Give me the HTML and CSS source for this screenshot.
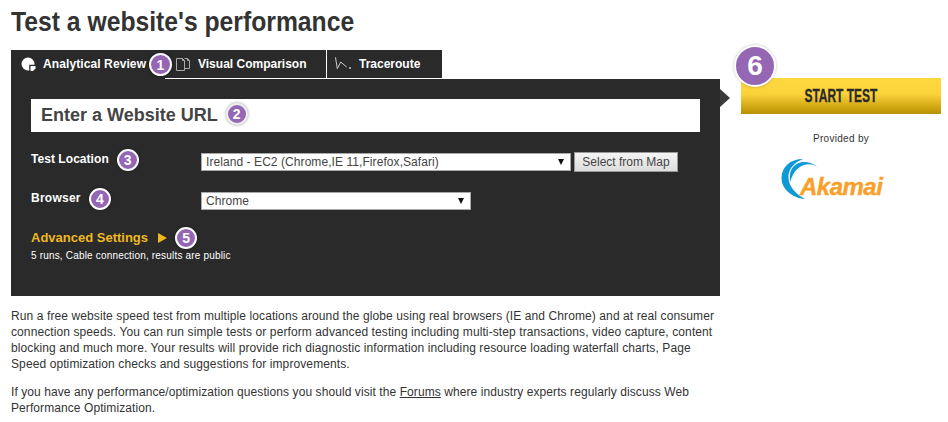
FILE: index.html
```html
<!DOCTYPE html>
<html lang="en">
<head>
<meta charset="utf-8">
<title>WebPagetest</title>
<link rel="stylesheet" href="styles.css">
</head>
<body>
<div class="page">
  <main class="main">
    <h1 class="title"><span class="title-text">Test a website's performance</span></h1>
    <div class="tabs">
      <div class="tab tab-active">
        <svg class="tab-icon" width="16" height="16" viewBox="0 0 16 16"><path d="M8 1.500a6.500 6.500 0 1 0 0 13c.6 0 1.200-.1 1.200-.1V8.800h5.200c.1-.3.1-.5.1-.8A6.500 6.500 0 0 0 8 1.500z" fill="#fff"/><path d="M10.500 10h5v2.500l-2.500 2.500h-2.500z" fill="#fff"/></svg>
        <span>Analytical Review</span>
        <b class="badge badge-tab">1</b>
      </div>
      <div class="tab tab-visual">
        <svg class="tab-icon" width="16" height="16" viewBox="0 0 16 16" fill="none" stroke="#aaa"><path d="M1.500 2.500h6l2 2v10h-8z"/><path d="M7.500 2.500v2h2M9.500 2.500h3l2 2v8h-5M12.500 2.500v2h2"/></svg>
        <span>Visual Comparison</span>
      </div>
      <div class="tab tab-trace">
        <svg class="tab-icon tab-icon-trace" width="18" height="16" viewBox="0 0 18 16" fill="none" stroke="#ccc"><path d="M.5 1.300l1.800 11.400 3.400-6.700 6 5"/><circle cx="15" cy="12" r="1" fill="#ccc" stroke="none"/></svg>
        <span>Traceroute</span>
      </div>
    </div>
    <section class="panel">
      <div class="url-box">
        <span>Enter a Website URL</span>
        <b class="badge badge-ring">2</b>
      </div>
      <div class="row row-location">
        <label class="field-label"><span>Test Location</span><b class="badge">3</b></label>
        <div class="select select-wide"><span>Ireland - EC2 (Chrome,IE 11,Firefox,Safari)</span><i class="arrow"></i></div>
        <button class="map-btn" type="button">Select from Map</button>
      </div>
      <div class="row row-browser">
        <label class="field-label"><span>Browser</span><b class="badge">4</b></label>
        <div class="select select-narrow"><span>Chrome</span><i class="arrow"></i></div>
      </div>
      <div class="advanced">
        <span class="adv-link">Advanced Settings</span>
        <i class="adv-arrow"></i>
        <b class="badge">5</b>
      </div>
      <p class="summary">5 runs, Cable connection, results are public</p>
      <i class="panel-arrow"></i>
    </section>
    <p class="copy">Run a free website speed test from multiple locations around the globe using real browsers (IE and Chrome) and at real consumer connection speeds. You can run simple tests or perform advanced testing including multi-step transactions, video capture, content blocking and much more. Your results will provide rich diagnostic information including resource loading waterfall charts, Page Speed optimization checks and suggestions for improvements.</p>
    <p class="copy copy-last">If you have any performance/optimization questions you should visit the <a class="link" href="#">Forums</a> where industry experts regularly discuss Web Performance Optimization.</p>
  </main>
  <aside class="side">
    <div class="start">
      <b class="badge badge-big">6</b>
      <div class="start-btn"><span class="start-text">START TEST</span></div>
    </div>
    <p class="provided">Provided by</p>
    <div class="akamai">
      <svg class="akamai-swoosh" width="42" height="42" viewBox="0 0 42 42">
        <path d="M23 1C10 1 1.500 9 1.500 20 1.500 31 12 40 25 41 16 36 9 29 8.500 20 8 12 13 5 23 1z" fill="#0f9ad6"/>
        <path d="M38 9.500C31 3 20 2 14 8 10 12 9 18 10.500 24 12 16 17 9 24 7 29 5.500 34 6.500 38 9.500z" fill="#0f9ad6"/>
      </svg>
      <span class="akamai-text">Akamai</span>
    </div>
  </aside>
</div>
</body>
</html>
```
FILE: styles.css
```css
* { box-sizing: border-box; }
html, body { margin: 0; padding: 0; background: #fff; }
body { width: 948px; height: 422px; overflow: hidden; font-family: "Liberation Sans", Arial, sans-serif; color: #333; }
.page { display: flex; align-items: flex-start; padding-left: 11px; }
.main { width: 709px; flex: none; }
.title { margin: 0; padding-top: 5px; height: 50px; font-size: 27px; line-height: 34px; font-weight: bold; color: #333; }
.title-text { display: inline-block; white-space: nowrap; transform: scaleX(.915); transform-origin: left center; }
.tabs { display: flex; height: 29px; }
.tab { position: relative; display: flex; align-items: center; background: #2a2a2a; color: #fff; font-size: 12px; font-weight: bold; height: 29px; border-right: 1px solid #fff; border-bottom: 1px solid #fff; }
.tab-active { width: 154px; padding: 0 0 2px 9px; border: 0; letter-spacing: .1px; }
.tab-visual { width: 162px; padding-left: 10px; }
.tab-trace { width: 115px; padding-left: 8px; border-right: 0; }
.tab-icon { flex: none; margin-right: 7px; }
.tab-icon-trace { margin-right: 6px; }
.panel { position: relative; height: 217px; background: #2a2a2a; padding: 20px 20px 0; }
.url-box { display: flex; align-items: center; height: 33px; background: #fff; padding-left: 10px; font-size: 18px; font-weight: bold; color: #444; }
.url-box .badge { margin: 0 0 3px 8px; }
.row { display: flex; align-items: center; }
.row-location { margin-top: 16px; height: 28px; }
.row-browser { margin-top: 11px; height: 28px; }
.field-label { width: 170px; flex: none; display: flex; align-items: center; padding-bottom: 4px; color: #fff; font-size: 12px; font-weight: bold; letter-spacing: .05px; }
.row-browser .field-label { letter-spacing: .25px; }
.field-label span { margin-bottom: 2px; }
.field-label .badge { margin-left: 8px; }
.select { position: relative; height: 18px; background: #fff; border: 1px solid #a9a9a9; color: #444; font-size: 12px; line-height: 16px; padding-left: 4px; letter-spacing: .07px; }
.select-wide { width: 370px; }
.select-narrow { width: 270px; }
.arrow { position: absolute; right: 6px; top: 5px; width: 0; height: 0; border-left: 3px solid transparent; border-right: 3px solid transparent; border-top: 6px solid #111; }
.map-btn { margin: 0 0 0 3px; width: 104px; height: 20px; padding: 0; border: 1px solid #999; background: linear-gradient(#f4f4f4, #ddd); color: #444; font: 12px "Liberation Sans", Arial, sans-serif; }
.advanced { display: flex; align-items: center; margin-top: 9px; height: 27px; color: #eeb921; font-size: 13px; font-weight: bold; }
.adv-arrow { margin-left: 10px; width: 0; height: 0; border-top: 5px solid transparent; border-bottom: 5px solid transparent; border-left: 9px solid #f0b91f; }
.advanced .badge { margin-left: 8px; }
.summary { margin: -1px 0 0; font-size: 10px; line-height: 12px; color: #fff; letter-spacing: .18px; }
.panel-arrow { position: absolute; right: -10px; top: 10px; width: 0; height: 0; border-top: 9px solid transparent; border-bottom: 9px solid transparent; border-left: 10px solid #3a3a3a; }
.badge { display: inline-flex; align-items: center; justify-content: center; flex: none; width: 22px; height: 22px; border-radius: 50%; background: #9566b3; border: 2px solid #fff; color: #fff; font-size: 14px; font-weight: bold; letter-spacing: 0; box-shadow: 0 0 3px rgba(0,0,0,.4); }
.badge-tab { position: absolute; right: -7px; top: 3px; z-index: 1; width: 23px; height: 23px; }
.badge-ring { border-color: #eee; }
.copy { margin: 12px 0 0; width: 708px; font-size: 12px; line-height: 16px; color: #333; letter-spacing: .1px; }
.copy-last { margin-top: 12px; letter-spacing: .08px; }
.link { color: #333; text-decoration: underline; }
.side { width: 200px; flex: none; margin-left: 21px; padding-top: 43px; text-align: center; }
.start { position: relative; padding-top: 35px; }
.badge-big { position: absolute; left: -7px; top: 2px; width: 42px; height: 42px; border-width: 2px; font-size: 28px; z-index: 1; box-shadow: 0 0 3px rgba(0,0,0,.25); }
.start-btn { height: 36px; line-height: 36px; background: linear-gradient(#ffd840 0, #fbd23a 45%, #c39a08 92%, #b8900a 100%); color: #2a2a2a; }
.start-text { display: inline-block; font-size: 19px; font-weight: bold; white-space: nowrap; transform: scaleX(.63); -webkit-text-stroke: .3px #2a2a2a; }
.provided { margin: 19px 0 0; font-size: 10px; line-height: 12px; color: #333; letter-spacing: .3px; }
.akamai { position: relative; width: 104px; height: 42px; margin: 13px 0 0 39px; text-align: left; }
.akamai-swoosh { position: absolute; left: 0; top: 0; }
.akamai-text { position: absolute; left: 20px; top: 17px; font-size: 24px; line-height: 24px; font-weight: bold; font-style: italic; color: #f99f2a; -webkit-text-stroke: .4px #f99f2a; letter-spacing: -.5px; }
```
